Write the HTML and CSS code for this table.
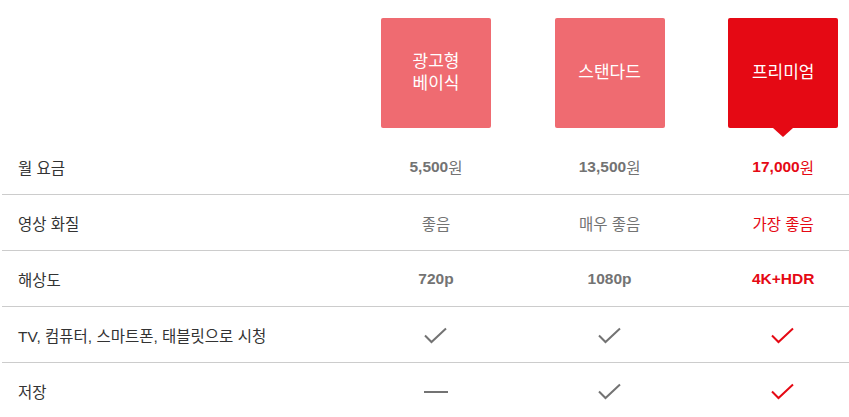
FILE: index.html
```html
<!DOCTYPE html>
<html lang="ko">
<head>
<meta charset="utf-8">
<link rel="stylesheet" href="styles.css">
</head>
<body>
<div class="plans">
  <div class="row head">
    <div class="cell label"></div>
    <div class="cell"><div class="plan">광고형<br>베이식</div></div>
    <div class="cell"><div class="plan">스탠다드</div></div>
    <div class="cell"><div class="plan selected">프리미엄</div></div>
  </div>
  <div class="row line">
    <div class="cell label">월 요금</div>
    <div class="cell val bold">5,500<span class="unit">원</span></div>
    <div class="cell val bold">13,500<span class="unit">원</span></div>
    <div class="cell val bold red">17,000<span class="unit">원</span></div>
  </div>
  <div class="row line">
    <div class="cell label">영상 화질</div>
    <div class="cell val">좋음</div>
    <div class="cell val">매우 좋음</div>
    <div class="cell val red">가장 좋음</div>
  </div>
  <div class="row line">
    <div class="cell label">해상도</div>
    <div class="cell val bold">720p</div>
    <div class="cell val bold">1080p</div>
    <div class="cell val bold red">4K+HDR</div>
  </div>
  <div class="row line">
    <div class="cell label">TV, 컴퓨터, 스마트폰, 태블릿으로 시청</div>
    <div class="cell val"><svg class="ico grey" width="24" height="18" viewBox="0 0 24 18"><path d="M1 8.5 L7.5 15 L22 1.5" fill="none" stroke="currentColor" stroke-width="2"/></svg></div>
    <div class="cell val"><svg class="ico grey" width="24" height="18" viewBox="0 0 24 18"><path d="M1 8.5 L7.5 15 L22 1.5" fill="none" stroke="currentColor" stroke-width="2"/></svg></div>
    <div class="cell val"><svg class="ico redi" width="24" height="18" viewBox="0 0 24 18"><path d="M1 8.5 L7.5 15 L22 1.5" fill="none" stroke="currentColor" stroke-width="2"/></svg></div>
  </div>
  <div class="row line last">
    <div class="cell label">저장</div>
    <div class="cell val"><span class="dash"></span></div>
    <div class="cell val"><svg class="ico grey" width="24" height="18" viewBox="0 0 24 18"><path d="M1 8.5 L7.5 15 L22 1.5" fill="none" stroke="currentColor" stroke-width="2"/></svg></div>
    <div class="cell val"><svg class="ico redi" width="24" height="18" viewBox="0 0 24 18"><path d="M1 8.5 L7.5 15 L22 1.5" fill="none" stroke="currentColor" stroke-width="2"/></svg></div>
  </div>
</div>
</body>
</html>
```
FILE: styles.css
```css
html, body {
  margin: 0;
  padding: 0;
  background: #fff;
  overflow: hidden;
}
body {
  font-family: "Liberation Sans", "Noto Sans CJK KR", Arial, sans-serif;
  font-size: 15.5px;
  color: #333;
}
.plans {
  width: 868px;
  margin-left: 2px;
}
.row {
  display: grid;
  grid-template-columns: 40% 20% 20% 20%;
}
.row.head {
  padding-top: 18px;
  height: 121px;
  align-items: start;
}
.row.head .cell {
  align-items: flex-start;
}
.row.line {
  height: 55px;
  border-bottom: 1px solid #ccc;
  align-items: center;
}
.row.last {
  border-bottom: none;
}
.cell {
  display: flex;
  justify-content: center;
  align-items: center;
}
.cell.label {
  justify-content: flex-start;
  padding-left: 16px;
  color: #333;
}
.plan {
  position: relative;
  width: 110px;
  height: 110px;
  background: #e50914;
  opacity: 0.6;
  border-radius: 2px;
  color: #fff;
  font-size: 17px;
  line-height: 22px;
  display: flex;
  align-items: center;
  justify-content: center;
  text-align: center;
  font-weight: 400;
}
.plan.selected {
  opacity: 1;
}
.plan.selected::after {
  content: "";
  position: absolute;
  left: 50%;
  top: 100%;
  margin-left: -10px;
  border-left: 10px solid transparent;
  border-right: 10px solid transparent;
  border-top: 9px solid #e50914;
}
.val {
  color: #737373;
}
.val.bold {
  font-weight: bold;
}
.unit {
  font-weight: 400;
}
.val.red {
  color: #e50914;
}
.ico {
  display: block;
  margin-top: 2px;
}
.ico.grey {
  color: #737373;
}
.ico.redi {
  color: #e50914;
}
.dash {
  display: block;
  width: 24px;
  height: 2px;
  background: #737373;
  margin-top: 2px;
}
```
